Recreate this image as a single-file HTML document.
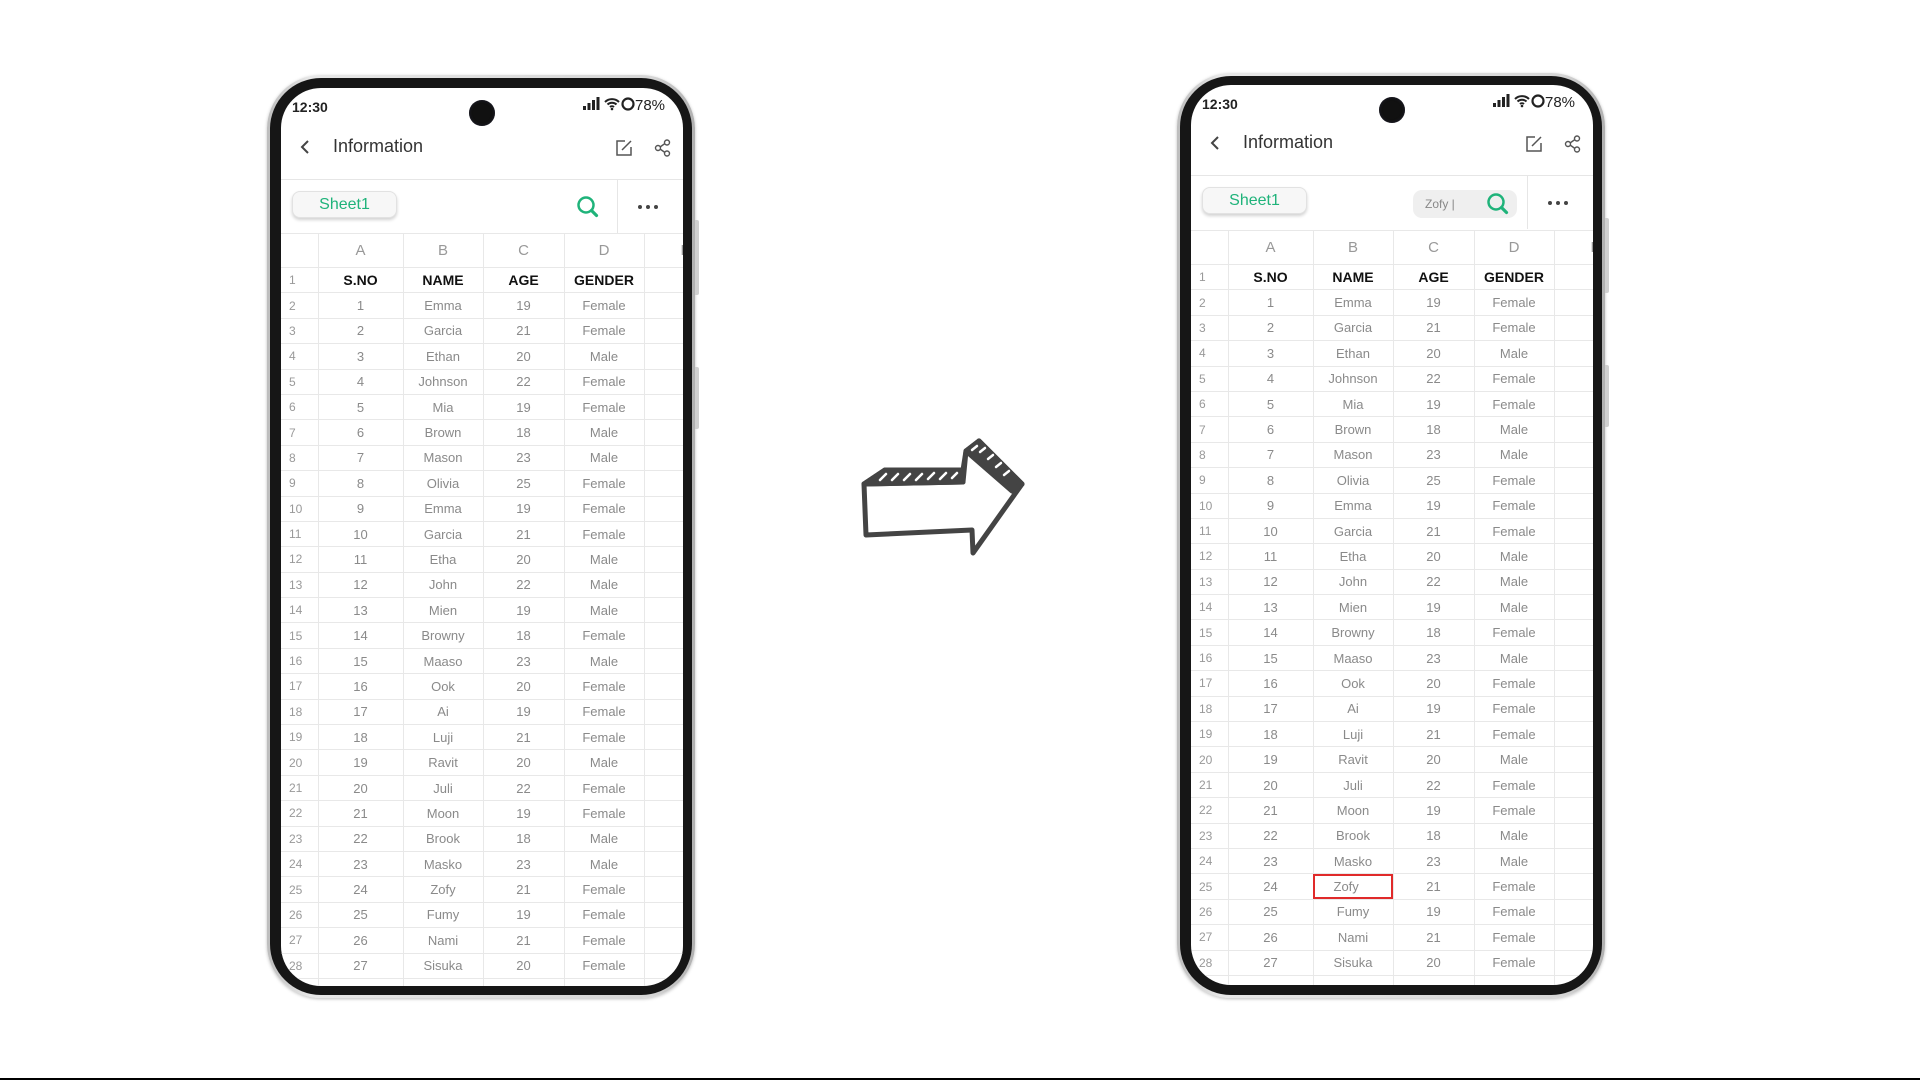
<!DOCTYPE html>
<html><head><meta charset="utf-8">
<style>
*{margin:0;padding:0;box-sizing:border-box}
body{width:1920px;height:1080px;background:#fff;position:relative;overflow:hidden;font-family:"Liberation Sans",sans-serif}
.bar{position:absolute;left:0;top:1078px;width:1920px;height:2px;background:#000}
.phone{position:absolute;width:428px;height:923px;border-radius:54px;background:linear-gradient(90deg,#bdbdbd,#e8e8e8 10%,#d6d6d6 90%,#b0b0b0);box-shadow:0 1px 3px rgba(0,0,0,.25)}
.bezel{position:absolute;left:3px;top:3px;right:3px;bottom:3px;border-radius:51px;background:#161616}
.btn{position:absolute;right:-4px;width:4px;background:#d0d0d0;border-radius:0 2px 2px 0}
.screen{position:absolute;left:14px;top:13px;width:402px;height:898px;border-radius:40px;background:#fff;overflow:hidden}
.time{position:absolute;left:11px;top:11px;font-size:14px;font-weight:bold;color:#222}
.cam{position:absolute;left:188px;top:12px;width:26px;height:26px;border-radius:50%;background:#111;box-shadow:inset 0 0 3px #223}
.stat{position:absolute;right:10px;top:8px}
.title{position:absolute;left:52px;top:48px;font-size:18px;color:#333}
.back{position:absolute;left:18px;top:51px}
.hicons{position:absolute;left:335px;top:51px}
.sep{position:absolute;left:0;right:0;top:91px;height:1px;background:#e6e6e6}
.sheet{position:absolute;left:11px;top:103px;width:105px;height:27px;border-radius:8px;background:#f7f7f7;border:1px solid #e2e2e2;box-shadow:0 2px 3px rgba(0,0,0,.18);color:#1fb37a;font-size:16px;text-align:center;line-height:25px}
.vdiv{position:absolute;left:336px;top:92px;width:1px;height:53px;background:#e6e6e6}
.dots{position:absolute;left:356px;top:116px}
.search{position:absolute;top:107px}
table{position:absolute;left:0;top:145px;border-collapse:collapse;table-layout:fixed;width:430px;border-top:1px solid #e6e6e6}
td{border:1px solid #e8e8e8;text-align:center;font-size:13px;color:#8a8a8a;height:25.4px;padding:0;white-space:nowrap;overflow:hidden}
td:first-child{text-align:left;padding-left:8px;color:#999;font-size:12px;border-left:none}
tr.cl td{height:34px;font-size:15px;color:#999}
tr.hd td{font-size:14px;font-weight:bold;color:#111}
tr.hd td:first-child{font-weight:normal;color:#999;font-size:12px}
.red{outline:2px solid #e02a2a;outline-offset:-2px}
.sbox{position:absolute;left:222px;top:105px;width:104px;height:28px;border-radius:9px;background:#efefef}
.sbox span{position:absolute;left:12px;top:7px;font-size:12px;color:#888}
</style></head><body>

<!-- LEFT PHONE -->
<div class="phone" style="left:267px;top:75px">
<div class="btn" style="top:145px;height:75px"></div>
<div class="btn" style="top:292px;height:62px"></div>
<div class="bezel"></div>
<div class="screen">
<div class="time">12:30</div>
<div class="cam"></div>
<svg class="stat" width="90" height="18" viewBox="0 0 90 18"><rect x="0" y="10" width="3" height="4" fill="#222"/><rect x="4.5" y="7" width="3" height="7" fill="#222"/><rect x="9" y="4" width="3" height="10" fill="#222"/><rect x="13.5" y="1" width="3" height="13" fill="#222"/><path d="M22 6a10 10 0 0 1 14 0M24.5 8.5a6.5 6.5 0 0 1 9 0M27 11a3 3 0 0 1 4 0" stroke="#222" stroke-width="2" fill="none"/><circle cx="29" cy="13" r="1.3" fill="#222"/><circle cx="45" cy="8" r="5.5" stroke="#222" stroke-width="2.2" fill="none"/><text x="52" y="14" font-size="15" font-family="Liberation Sans" fill="#222">78%</text></svg>
<svg class="back" width="12" height="16"><path d="M9 2L3 8l6 6" stroke="#444" stroke-width="2" fill="none"/></svg>
<div class="title">Information</div>
<svg class="hicons" width="60" height="18" viewBox="0 0 60 18"><path d="M9 2H1v14h14V8" stroke="#555" stroke-width="1.5" fill="none"/><path d="M6 11l9-9" stroke="#555" stroke-width="1.5"/><circle cx="51" cy="3.5" r="2.5" stroke="#555" stroke-width="1.4" fill="none"/><circle cx="51" cy="14.5" r="2.5" stroke="#555" stroke-width="1.4" fill="none"/><circle cx="42" cy="9" r="2.5" stroke="#555" stroke-width="1.4" fill="none"/><path d="M44 8l5-3.5M44 10l5 3.5" stroke="#555" stroke-width="1.4"/></svg>
<div class="sep"></div>
<div class="sheet">Sheet1</div>
<svg class="search" style="left:295px" width="24" height="24" viewBox="0 0 24 24"><circle cx="10" cy="10" r="7.5" stroke="#1fb37a" stroke-width="2.5" fill="none"/><path d="M15.5 15.5l5 5" stroke="#1fb37a" stroke-width="3.2" stroke-linecap="round"/></svg>
<div class="vdiv"></div>
<svg class="dots" width="22" height="6"><circle cx="3" cy="3" r="2" fill="#444"/><circle cx="11" cy="3" r="2" fill="#444"/><circle cx="19" cy="3" r="2" fill="#444"/></svg>
<table>
<colgroup><col style="width:37px"><col style="width:85px"><col style="width:80px"><col style="width:81px"><col style="width:80px"><col style="width:67px"></colgroup>
<tr class="cl"><td></td><td>A</td><td>B</td><td>C</td><td>D</td><td style="text-align:left;padding-left:36px">E</td></tr>
<tr class="hd"><td>1</td><td>S.NO</td><td>NAME</td><td>AGE</td><td>GENDER</td><td></td></tr>
<tr><td>2</td><td>1</td><td>Emma</td><td>19</td><td>Female</td><td></td></tr>
<tr><td>3</td><td>2</td><td>Garcia</td><td>21</td><td>Female</td><td></td></tr>
<tr><td>4</td><td>3</td><td>Ethan</td><td>20</td><td>Male</td><td></td></tr>
<tr><td>5</td><td>4</td><td>Johnson</td><td>22</td><td>Female</td><td></td></tr>
<tr><td>6</td><td>5</td><td>Mia</td><td>19</td><td>Female</td><td></td></tr>
<tr><td>7</td><td>6</td><td>Brown</td><td>18</td><td>Male</td><td></td></tr>
<tr><td>8</td><td>7</td><td>Mason</td><td>23</td><td>Male</td><td></td></tr>
<tr><td>9</td><td>8</td><td>Olivia</td><td>25</td><td>Female</td><td></td></tr>
<tr><td>10</td><td>9</td><td>Emma</td><td>19</td><td>Female</td><td></td></tr>
<tr><td>11</td><td>10</td><td>Garcia</td><td>21</td><td>Female</td><td></td></tr>
<tr><td>12</td><td>11</td><td>Etha</td><td>20</td><td>Male</td><td></td></tr>
<tr><td>13</td><td>12</td><td>John</td><td>22</td><td>Male</td><td></td></tr>
<tr><td>14</td><td>13</td><td>Mien</td><td>19</td><td>Male</td><td></td></tr>
<tr><td>15</td><td>14</td><td>Browny</td><td>18</td><td>Female</td><td></td></tr>
<tr><td>16</td><td>15</td><td>Maaso</td><td>23</td><td>Male</td><td></td></tr>
<tr><td>17</td><td>16</td><td>Ook</td><td>20</td><td>Female</td><td></td></tr>
<tr><td>18</td><td>17</td><td>Ai</td><td>19</td><td>Female</td><td></td></tr>
<tr><td>19</td><td>18</td><td>Luji</td><td>21</td><td>Female</td><td></td></tr>
<tr><td>20</td><td>19</td><td>Ravit</td><td>20</td><td>Male</td><td></td></tr>
<tr><td>21</td><td>20</td><td>Juli</td><td>22</td><td>Female</td><td></td></tr>
<tr><td>22</td><td>21</td><td>Moon</td><td>19</td><td>Female</td><td></td></tr>
<tr><td>23</td><td>22</td><td>Brook</td><td>18</td><td>Male</td><td></td></tr>
<tr><td>24</td><td>23</td><td>Masko</td><td>23</td><td>Male</td><td></td></tr>
<tr><td>25</td><td>24</td><td>Zofy</td><td>21</td><td>Female</td><td></td></tr>
<tr><td>26</td><td>25</td><td>Fumy</td><td>19</td><td>Female</td><td></td></tr>
<tr><td>27</td><td>26</td><td>Nami</td><td>21</td><td>Female</td><td></td></tr>
<tr><td>28</td><td>27</td><td>Sisuka</td><td>20</td><td>Female</td><td></td></tr>
<tr><td></td><td></td><td></td><td></td><td></td><td></td></tr>
</table>
</div>
</div>

<!-- ARROW -->
<svg style="position:absolute;left:850px;top:430px" width="190" height="140" viewBox="850 430 190 140">
<g stroke="#444" stroke-width="5" fill="none" stroke-linejoin="round" stroke-linecap="round">
<path d="M864 484L885 470L963 470L966 451L979 441L1022 484L973 553L972 530L866 535Z"/>
<path d="M864 484L963 482M966 451L963 482M979 441L1022 484"/>
<path d="M885 470L963 470L963 482L864 484Z" fill="#444"/>
<path d="M966 451L979 441L1022 484L1012 491Z" fill="#444"/>
</g>
<g stroke="#fff" stroke-width="2.5" stroke-linecap="round">
<path d="M880 480l6-6M892 480l6-6M904 480l6-6M916 480l6-6M928 479l6-6M940 479l6-6M952 478l5-5"/>
<path d="M972 450l5-4M980 452l5-4M988 459l5-4M996 467l5-4M1004 475l5-4"/>
</g>
</svg>

<!-- RIGHT PHONE -->
<div class="phone" style="left:1177px;top:73px;height:925px">
<div class="btn" style="top:145px;height:75px"></div>
<div class="btn" style="top:292px;height:62px"></div>
<div class="bezel"></div>
<div class="screen" style="top:12px;height:900px">
<div class="time" style="top:11px">12:30</div>
<div class="cam" style="top:12px"></div>
<svg class="stat" style="top:8px" width="90" height="18" viewBox="0 0 90 18"><rect x="0" y="10" width="3" height="4" fill="#222"/><rect x="4.5" y="7" width="3" height="7" fill="#222"/><rect x="9" y="4" width="3" height="10" fill="#222"/><rect x="13.5" y="1" width="3" height="13" fill="#222"/><path d="M22 6a10 10 0 0 1 14 0M24.5 8.5a6.5 6.5 0 0 1 9 0M27 11a3 3 0 0 1 4 0" stroke="#222" stroke-width="2" fill="none"/><circle cx="29" cy="13" r="1.3" fill="#222"/><circle cx="45" cy="8" r="5.5" stroke="#222" stroke-width="2.2" fill="none"/><text x="52" y="14" font-size="15" font-family="Liberation Sans" fill="#222">78%</text></svg>
<svg class="back" style="top:50px" width="12" height="16"><path d="M9 2L3 8l6 6" stroke="#444" stroke-width="2" fill="none"/></svg>
<div class="title" style="top:47px">Information</div>
<svg class="hicons" style="top:50px" width="60" height="18" viewBox="0 0 60 18"><path d="M9 2H1v14h14V8" stroke="#555" stroke-width="1.5" fill="none"/><path d="M6 11l9-9" stroke="#555" stroke-width="1.5"/><circle cx="51" cy="3.5" r="2.5" stroke="#555" stroke-width="1.4" fill="none"/><circle cx="51" cy="14.5" r="2.5" stroke="#555" stroke-width="1.4" fill="none"/><circle cx="42" cy="9" r="2.5" stroke="#555" stroke-width="1.4" fill="none"/><path d="M44 8l5-3.5M44 10l5 3.5" stroke="#555" stroke-width="1.4"/></svg>
<div class="sep" style="top:90px"></div>
<div class="sheet" style="top:102px">Sheet1</div>
<div class="sbox" style="top:105px"><span>Zofy |</span></div>
<svg class="search" style="left:295px;top:107px" width="24" height="24" viewBox="0 0 24 24"><circle cx="10" cy="10" r="7.5" stroke="#1fb37a" stroke-width="2.5" fill="none"/><path d="M15.5 15.5l5 5" stroke="#1fb37a" stroke-width="3.2" stroke-linecap="round"/></svg>
<div class="vdiv" style="top:91px"></div>
<svg class="dots" style="top:115px" width="22" height="6"><circle cx="3" cy="3" r="2" fill="#444"/><circle cx="11" cy="3" r="2" fill="#444"/><circle cx="19" cy="3" r="2" fill="#444"/></svg>
<table style="top:145px">
<colgroup><col style="width:37px"><col style="width:85px"><col style="width:80px"><col style="width:81px"><col style="width:80px"><col style="width:67px"></colgroup>
<tr class="cl"><td></td><td>A</td><td>B</td><td>C</td><td>D</td><td style="text-align:left;padding-left:36px">E</td></tr>
<tr class="hd"><td>1</td><td>S.NO</td><td>NAME</td><td>AGE</td><td>GENDER</td><td></td></tr>
<tr><td>2</td><td>1</td><td>Emma</td><td>19</td><td>Female</td><td></td></tr>
<tr><td>3</td><td>2</td><td>Garcia</td><td>21</td><td>Female</td><td></td></tr>
<tr><td>4</td><td>3</td><td>Ethan</td><td>20</td><td>Male</td><td></td></tr>
<tr><td>5</td><td>4</td><td>Johnson</td><td>22</td><td>Female</td><td></td></tr>
<tr><td>6</td><td>5</td><td>Mia</td><td>19</td><td>Female</td><td></td></tr>
<tr><td>7</td><td>6</td><td>Brown</td><td>18</td><td>Male</td><td></td></tr>
<tr><td>8</td><td>7</td><td>Mason</td><td>23</td><td>Male</td><td></td></tr>
<tr><td>9</td><td>8</td><td>Olivia</td><td>25</td><td>Female</td><td></td></tr>
<tr><td>10</td><td>9</td><td>Emma</td><td>19</td><td>Female</td><td></td></tr>
<tr><td>11</td><td>10</td><td>Garcia</td><td>21</td><td>Female</td><td></td></tr>
<tr><td>12</td><td>11</td><td>Etha</td><td>20</td><td>Male</td><td></td></tr>
<tr><td>13</td><td>12</td><td>John</td><td>22</td><td>Male</td><td></td></tr>
<tr><td>14</td><td>13</td><td>Mien</td><td>19</td><td>Male</td><td></td></tr>
<tr><td>15</td><td>14</td><td>Browny</td><td>18</td><td>Female</td><td></td></tr>
<tr><td>16</td><td>15</td><td>Maaso</td><td>23</td><td>Male</td><td></td></tr>
<tr><td>17</td><td>16</td><td>Ook</td><td>20</td><td>Female</td><td></td></tr>
<tr><td>18</td><td>17</td><td>Ai</td><td>19</td><td>Female</td><td></td></tr>
<tr><td>19</td><td>18</td><td>Luji</td><td>21</td><td>Female</td><td></td></tr>
<tr><td>20</td><td>19</td><td>Ravit</td><td>20</td><td>Male</td><td></td></tr>
<tr><td>21</td><td>20</td><td>Juli</td><td>22</td><td>Female</td><td></td></tr>
<tr><td>22</td><td>21</td><td>Moon</td><td>19</td><td>Female</td><td></td></tr>
<tr><td>23</td><td>22</td><td>Brook</td><td>18</td><td>Male</td><td></td></tr>
<tr><td>24</td><td>23</td><td>Masko</td><td>23</td><td>Male</td><td></td></tr>
<tr><td>25</td><td>24</td><td class="red" style="text-align:left;padding-left:20px">Zofy</td><td>21</td><td>Female</td><td></td></tr>
<tr><td>26</td><td>25</td><td>Fumy</td><td>19</td><td>Female</td><td></td></tr>
<tr><td>27</td><td>26</td><td>Nami</td><td>21</td><td>Female</td><td></td></tr>
<tr><td>28</td><td>27</td><td>Sisuka</td><td>20</td><td>Female</td><td></td></tr>
<tr><td></td><td></td><td></td><td></td><td></td><td></td></tr>
</table>
</div>
</div>

<div class="bar"></div>
</body></html>
